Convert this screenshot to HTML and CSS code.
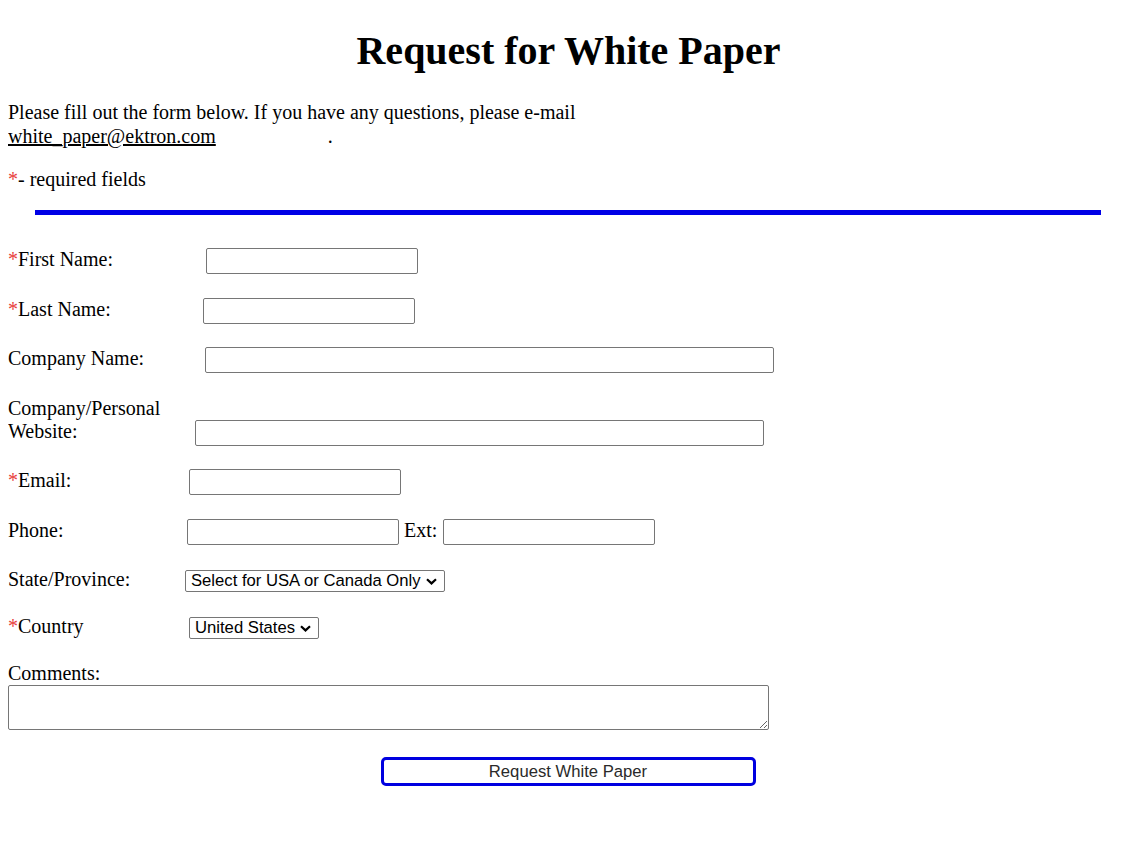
FILE: index.html
```html
<!DOCTYPE html>
<html lang="en">
<head>
<meta charset="utf-8">
<title>Request for White Paper</title>
<link rel="stylesheet" href="styles.css">
</head>
<body>
<h1 class="title">Request for White Paper</h1>
<p class="intro">Please fill out the form below. If you have any questions, please e-mail <a class="mail" href="mailto:white_paper@ektron.com">white_paper@ektron.com</a><span class="dot">.</span></p>
<p class="req-note"><span class="req">*</span>- required fields</p>
<div class="rule"></div>
<form class="form">
  <div class="row">
    <label class="lbl lbl-first"><span class="req">*</span>First Name:</label>
    <input class="field field-short" type="text">
  </div>
  <div class="row">
    <label class="lbl lbl-last"><span class="req">*</span>Last Name:</label>
    <input class="field field-short" type="text">
  </div>
  <div class="row row-tight">
    <label class="lbl lbl-company">Company Name:</label>
    <input class="field field-long" type="text">
  </div>
  <div class="row">
    <label class="lbl lbl-web">Company/Personal<br>Website:</label>
    <input class="field field-long" type="text">
  </div>
  <div class="row row-tight">
    <label class="lbl lbl-email"><span class="req">*</span>Email:</label>
    <input class="field field-short" type="text">
  </div>
  <div class="row">
    <label class="lbl lbl-phone">Phone:</label>
    <input class="field field-short" type="text">
    <label class="ext">Ext:</label>
    <input class="field field-short" type="text">
  </div>
  <div class="row row-tight">
    <label class="lbl lbl-state">State/Province:</label>
    <select class="sel sel-state"><option>Select for USA or Canada Only</option></select>
  </div>
  <div class="row row-tight">
    <label class="lbl lbl-country"><span class="req">*</span>Country</label>
    <select class="sel sel-country"><option>United States</option></select>
  </div>
  <div class="comments">
    <label class="lbl-comments">Comments:</label>
    <textarea class="area"></textarea>
  </div>
  <div class="actions">
    <button class="submit" type="button">Request White Paper</button>
  </div>
</form>
</body>
</html>
```

FILE: styles.css
```css
html, body {
  background: #ffffff;
}
body {
  margin: 8px;
  font-family: "Liberation Serif", "Times New Roman", serif;
  font-size: 20px;
  color: #000;
}
.title {
  font-size: 40px;
  font-weight: bold;
  text-align: center;
  margin: 20px 0 26px;
  padding-left: 4px;
  line-height: 46px;
}
.intro {
  width: 600px;
  margin: 0 0 20px;
  line-height: 24px;
}
.mail {
  color: #000;
  text-decoration: underline;
}
.dot {
  margin-left: 112px;
}
.req-note {
  margin: 0;
  line-height: 23px;
}
.req {
  color: #e8403c;
}
.rule {
  height: 5px;
  background: #0000e6;
  margin: 19px 24px 0 27px;
}
.form {
  margin-top: 33px;
  display: flex;
  flex-direction: column;
  gap: 24px;
}
.row {
  display: flex;
  align-items: last baseline;
}
.row-tight {
  margin-top: -1px;
}
.lbl {
  display: inline-block;
  line-height: 23px;
  flex: none;
}
.lbl-first { width: 198px; }
.lbl-last { width: 195px; }
.lbl-company { width: 197px; }
.lbl-web { width: 187px; }
.lbl-email { width: 181px; }
.lbl-phone { width: 179px; }
.lbl-state { width: 177px; }
.lbl-country { width: 181px; }
.field {
  box-sizing: border-box;
  height: 26px;
  border: 1px solid #767676;
  border-radius: 2px;
  padding: 1px 3px;
  font-family: "Liberation Sans", Arial, sans-serif;
  font-size: 16.67px;
  background: #fff;
  margin: 0;
}
.field-short { width: 212px; }
.field-long { width: 569px; }
.ext {
  margin: 0 6px 0 5px;
}
.sel {
  box-sizing: border-box;
  -webkit-appearance: none;
  appearance: none;
  height: 22px;
  border: 1px solid #767676;
  border-radius: 2px;
  font-family: "Liberation Sans", Arial, sans-serif;
  font-size: 16.67px;
  line-height: 20px;
  color: #000;
  margin: 0;
  padding: 0 20px 0 5px;
  background-color: #fff;
  background-image: url("data:image/svg+xml,%3Csvg xmlns='http://www.w3.org/2000/svg' width='11' height='7' viewBox='0 0 11 7'%3E%3Cpath d='M1 1.2 L5.5 5.4 L10 1.2' fill='none' stroke='%23000' stroke-width='2.2'/%3E%3C/svg%3E");
  background-repeat: no-repeat;
  background-position: right 7px center;
  background-size: 11px 7px;
}
.sel-state { width: 260px; }
.sel-country { width: 130px; }
.comments {
  display: flex;
  flex-direction: column;
  margin-top: -1px;
}
.lbl-comments {
  line-height: 23px;
}
.area {
  box-sizing: border-box;
  width: 761px;
  height: 45px;
  border: 1px solid #767676;
  border-radius: 2px;
  margin: 0;
  font-family: "Liberation Mono", monospace;
  font-size: 16px;
}
.actions {
  display: flex;
  justify-content: center;
  margin-top: 3px;
}
.submit {
  box-sizing: border-box;
  width: 375px;
  height: 29px;
  border: 3px solid #0000e0;
  border-radius: 5px;
  background: #fff;
  color: #2a2a2a;
  font-family: "Liberation Sans", Arial, sans-serif;
  font-size: 16.67px;
  padding: 0;
  margin-left: 3px;
}
```
